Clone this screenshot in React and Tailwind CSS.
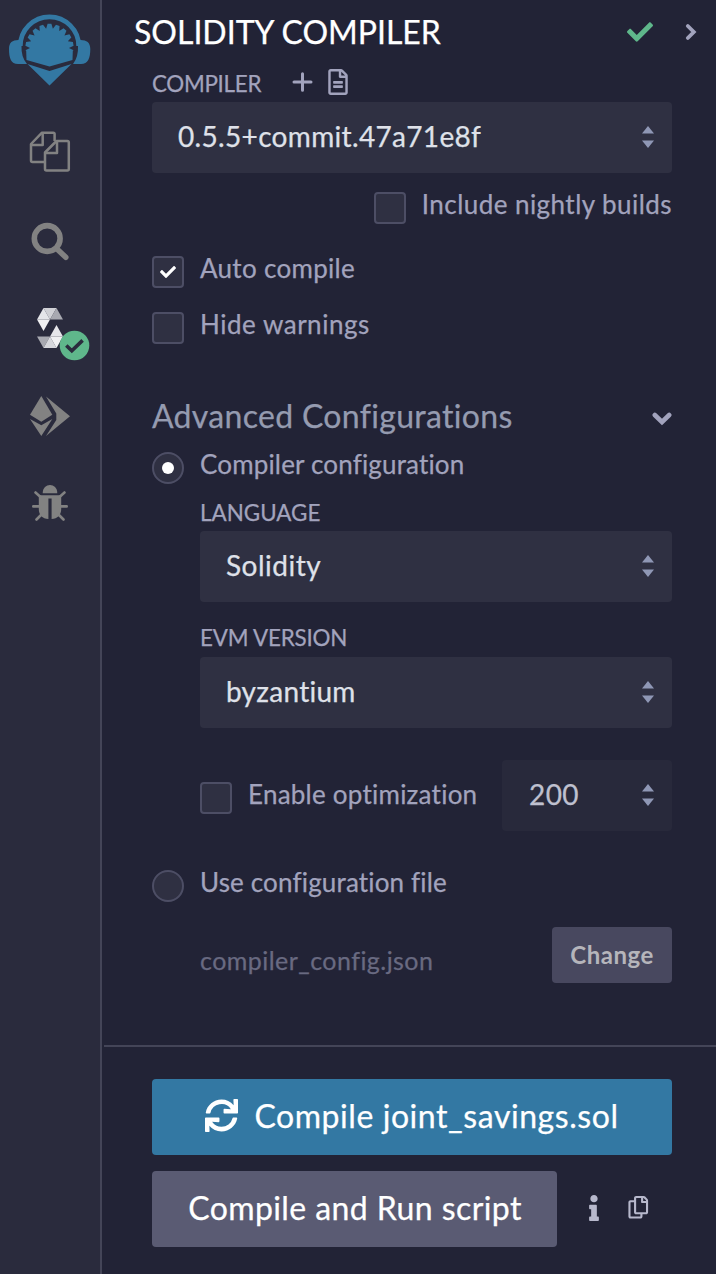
import { FaCheck, FaInfo, FaRegCopy, FaRegFileAlt, FaSync } from 'react-icons/fa';

// Outline of the scalloped shell: flat teeth separated by narrow notches.
const shell = (() => {
  const cx = 49.5, cy = 48;
  const at = (deg, r) => {
    const a = (deg * Math.PI) / 180;
    return `${(cx + r * Math.sin(a)).toFixed(2)},${(cy - r * Math.cos(a)).toFixed(2)}`;
  };
  const pts = ['26.5,60', at(-97, 23.5)];
  for (let n = -90; n <= 90; n += 20) {
    pts.push(at(n - 5.5, 24.2), at(n, 19.5), at(n + 5.5, 24.2));
  }
  pts.push(at(97, 23.5), '72.5,60', '49.5,66.5');
  return pts.join(' ');
})();

function Logo() {
  return (
    <svg width="100" height="100" viewBox="0 0 100 100" fill="#3378a3">
      <path d="M20.3 46 A29.2 29.2 0 0 1 78.7 46" fill="none" stroke="#3378a3" strokeWidth="4.8" />
      <path d="M20 40 C13 39.500 9 42 9 49 C9 58 11 64 18 64 H27 Q21 57 21.500 46 Z" />
      <path d="M79 40 C86 39.500 90.300 42 90.300 49 C90.300 58 88 64 81 64 H73 Q78.500 57 78 46 Z" />
      <polygon points={shell} />
      <path d="M27.500 64 L49.500 71 L71.500 64 L49.500 85.500 Z" />
    </svg>
  );
}

function FilesIcon() {
  return (
    <svg width="42" height="42" viewBox="0 0 42 42" fill="none" stroke="#828282" strokeWidth="2.500" strokeLinejoin="round">
      <path d="M15.500 31 H3.500 Q2 31 2 29.500 V13 L13 1.700 H24.300 Q25.600 1.700 25.600 3 V10" />
      <path d="M13.700 2.500 V14 H2.500" />
      <path d="M27.500 10 H38.300 Q39.800 10 39.800 11.500 V38 Q39.800 39.500 38.300 39.500 H17.500 Q16 39.500 16 38 V21.500 Z" />
      <path d="M28 11 V22 H17" />
    </svg>
  );
}

function SearchIcon() {
  return (
    <svg className="mt-[1px]" width="40" height="40" viewBox="0 0 40 40" fill="none" stroke="#828282">
      <circle cx="17.200" cy="17.500" r="12.900" strokeWidth="5.600" />
      <path d="M27 28 L35.800 36.300" strokeWidth="5.500" strokeLinecap="round" />
    </svg>
  );
}

function SolidityIcon() {
  return (
    <svg width="26" height="42" viewBox="0 0 26 42">
      <path d="M6.500 1 H19.500 L13 12.500 Z" fill="#d0d1d6" />
      <path d="M6.500 1 L13 12.500 H0 Z" fill="#e4e5e9" />
      <path d="M19.500 1 L26 12.500 H13 Z" fill="#a8a9b1" />
      <path d="M0 12.500 H13 L6.500 24 Z" fill="#f0f0f2" />
      <path d="M19.500 18 L26 29.500 H13 Z" fill="#e6e6ea" />
      <path d="M0 29.500 H13 L6.500 41 Z" fill="#a8a9b1" />
      <path d="M13 29.500 L19.500 41 H6.500 Z" fill="#d6d7dc" />
      <path d="M13 29.500 H26 L19.500 41 Z" fill="#f0f0f2" />
    </svg>
  );
}

function SuccessBadge() {
  return (
    <svg className="absolute left-[58.500px] top-[46px]" width="31" height="31" viewBox="0 0 31 31">
      <circle cx="15.500" cy="15.500" r="14.800" fill="#5fb78b" />
      <path d="M7.300 15.500 L12.800 20.700 L23.600 10.400" fill="none" stroke="#2a2b3d" strokeWidth="3.600" />
    </svg>
  );
}

function DeployIcon() {
  return (
    <svg width="42" height="42" viewBox="0 0 42 42" fill="#828282">
      <path d="M12.300 1 L23.300 19.700 L12.300 26.700 L1 19.700 Z" />
      <path d="M1 24 L12.300 30.300 L23.300 24 L12.300 41 Z" />
      <path d="M17 1.500 L41 21.300 L17 41 L27.300 25 V18.500 Z" />
    </svg>
  );
}

function BugIcon() {
  return (
    <svg className="-mt-[2px]" width="38" height="38" viewBox="0 0 38 38" fill="#828282">
      <path d="M11.700 9.200 C11.700 -1.600 26.300 -1.600 26.300 9.200 Z" />
      <g stroke="#828282" strokeWidth="2.600" strokeLinecap="round">
        <path d="M4.500 8.500 L9.500 13 M33.500 8.500 L28.500 13 M2.300 22.400 H9 M35.700 22.400 H29 M5.500 35.500 L10.500 30.500 M32.500 35.500 L27.500 30.500" />
      </g>
      <path d="M7.800 11.300 H30.200 V25 C30.200 31 26.500 34.800 20.600 35 V14.500 H17.400 V35 C11.500 34.800 7.800 31 7.800 25 Z" />
    </svg>
  );
}

function SpinArrows() {
  return (
    <svg className="-mt-[2px]" width="12" height="24" viewBox="0 0 12 24" fill="#8f97b5">
      <path d="M0 8.500 L6 1 L12 8.500 Z" />
      <path d="M0 15.500 H12 L6 23 Z" />
    </svg>
  );
}

function Select({ children, className }) {
  return (
    <div className={`flex h-[71px] items-center justify-between rounded-[4px] bg-[#2f3042] pr-[18px] pl-[26px] text-[28px] text-[#dfe1e9] ${className}`}>
      <span className="-mt-[3px] leading-8 whitespace-nowrap">{children}</span>
      <SpinArrows />
    </div>
  );
}

function Box({ checked }) {
  return (
    <span className="flex size-8 shrink-0 items-center justify-center rounded-[4px] border-2 border-[#4d4e65] bg-[#2f3042]">
      {checked && <FaCheck size={16} color="#fff" />}
    </span>
  );
}

function Radio({ checked }) {
  return (
    <span className="flex size-8 shrink-0 items-center justify-center rounded-full border-2 border-[#4d4e65] bg-[#2f3042]">
      {checked && <span className="size-3 rounded-full bg-white" />}
    </span>
  );
}

function Option({ control, children, className }) {
  return (
    <div className={`flex h-8 items-start gap-4 text-[26px] text-[#a2a3bd] ${className}`}>
      {control}
      <span className="leading-[24px] whitespace-nowrap">{children}</span>
    </div>
  );
}

function NavItem({ children }) {
  return <div className="relative flex h-[88px] w-[100px] shrink-0 items-center justify-center">{children}</div>;
}

export default function App() {
  return (
    <div className="flex h-[1274px] w-[716px] overflow-hidden bg-[#222336] font-['Lato','Liberation_Sans',sans-serif] [-webkit-text-stroke:0.25px_currentColor]">
      <nav className="flex w-[102px] shrink-0 flex-col border-r-2 border-[#444558] bg-[#2a2b3d]">
        <div className="h-[108px] shrink-0"><Logo /></div>
        <NavItem><FilesIcon /></NavItem>
        <NavItem><SearchIcon /></NavItem>
        <NavItem><SolidityIcon /><SuccessBadge /></NavItem>
        <NavItem><DeployIcon /></NavItem>
        <NavItem><BugIcon /></NavItem>
      </nav>

      <main className="flex min-w-0 flex-1 flex-col pl-[2px]">
        <header className="flex h-[64px] shrink-0 items-center pl-[30px]">
          <h1 className="w-[493px] text-[32px] leading-[62px] text-white">SOLIDITY COMPILER</h1>
          <FaCheck className="-mt-[1px]" size={26} color="#5fb78b" />
          <svg className="-mt-[1px] ml-[32px]" width="12" height="18" viewBox="0 0 12 18" fill="none" stroke="#a2a3bd" strokeWidth="3.800" strokeLinecap="round">
            <path d="M2.800 3 L8.800 9 L2.800 15" />
          </svg>
        </header>

        <section className="flex flex-col pr-[44px] pl-[48px]">
          <div className="flex h-[38px] items-center text-[22.400px] text-[#a2a3bd]">
            <span className="mt-[2px] w-[140px] tracking-[-0.300px]">COMPILER</span>
            <svg className="-mt-[2px]" width="21" height="20" viewBox="0 0 21 20" stroke="#a2a3bd" strokeWidth="3" strokeLinecap="round">
              <path d="M10.500 1.800 V18.200 M2 10 H19" />
            </svg>
            <FaRegFileAlt className="-mt-[3px] ml-[12px]" size={26} />
          </div>
          <Select className="tracking-[0.330px]">0.5.5+commit.47a71e8f</Select>
          <Option className="mt-[19px] self-end tracking-[0.450px]" control={<Box />}>Include nightly builds</Option>
          <Option className="mt-8 tracking-[0.300px]" control={<Box checked />}>Auto compile</Option>
          <Option className="mt-6 tracking-[0.520px]" control={<Box />}>Hide warnings</Option>

          <div className="mt-[50px] flex h-[44px] items-center justify-between">
            <h2 className="text-[32px] leading-[44px] tracking-[0.310px] text-[#959bb0]">Advanced Configurations</h2>
            <svg className="mt-[6px]" width="20" height="14" viewBox="0 0 20 14" fill="none" stroke="#a2a3bd" strokeWidth="4.600" strokeLinecap="round">
              <path d="M2.800 3 L10 10 L17.200 3" />
            </svg>
          </div>
          <Option className="mt-[14px] tracking-[0.160px]" control={<Radio checked />}>Compiler configuration</Option>

          <div className="flex flex-col pl-12">
            <label className="mt-[14px] h-[33px] text-[22.400px] leading-[30px] tracking-[0.010px] text-[#a2a3bd]">LANGUAGE</label>
            <Select className="tracking-[0.500px]">Solidity</Select>
            <label className="mt-[21px] h-[34px] text-[22.400px] leading-[30px] tracking-[-0.200px] text-[#a2a3bd]">EVM VERSION</label>
            <Select className="tracking-[0.280px]">byzantium</Select>
            <div className="mt-8 flex items-center justify-between">
              <Option className="mt-[5px] tracking-[0.240px]" control={<Box />}>Enable optimization</Option>
              <div className="flex h-[71px] w-[170px] items-center justify-between rounded-[4px] bg-[#28293b] pr-[18px] pl-[27px] text-[28px] tracking-[0.430px] text-[#bfc0cf]">
                <span className="-mt-[3px] leading-8">200</span>
                <SpinArrows />
              </div>
            </div>
          </div>

          <Option className="mt-[39px] tracking-[0.160px]" control={<Radio />}>Use configuration file</Option>
          <div className="mt-[25px] flex h-[56px] items-center justify-between pl-12">
            <span className="mt-[12px] text-[25px] tracking-[0.450px] text-[#696a81]">compiler_config.json</span>
            <button className="h-[56px] w-[120px] rounded-[4px] bg-[#48485f] text-[24px] leading-[56px] font-bold tracking-[0.500px] text-[#b5b5bb] [-webkit-text-stroke:0px]">Change</button>
          </div>
        </section>

        <footer className="mt-[62px] flex flex-col border-t-2 border-[#444558] pr-[44px] pl-[48px] pt-8 text-[32px] text-white">
          <button className="flex h-[76px] items-center justify-center gap-[16px] rounded-[4px] bg-[#3378a3]">
            <FaSync className="-mt-[4px]" size={33} />
            <span className="-mt-[2px] leading-[72px] tracking-[0.560px]">Compile joint_savings.sol</span>
          </button>
          <div className="mt-4 flex items-center text-[#b7b8cc]">
            <button className="h-[76px] w-[405px] rounded-[4px] bg-[#5a5b73] pb-[2px] pl-[1px] leading-[74px] tracking-[0.410px] text-white">Compile and Run script</button>
            <FaInfo className="-mt-[2px] ml-[24px]" size={26} />
            <FaRegCopy className="-mt-[3px] ml-[20px]" size={22.500} />
          </div>
        </footer>
      </main>
    </div>
  );
}
